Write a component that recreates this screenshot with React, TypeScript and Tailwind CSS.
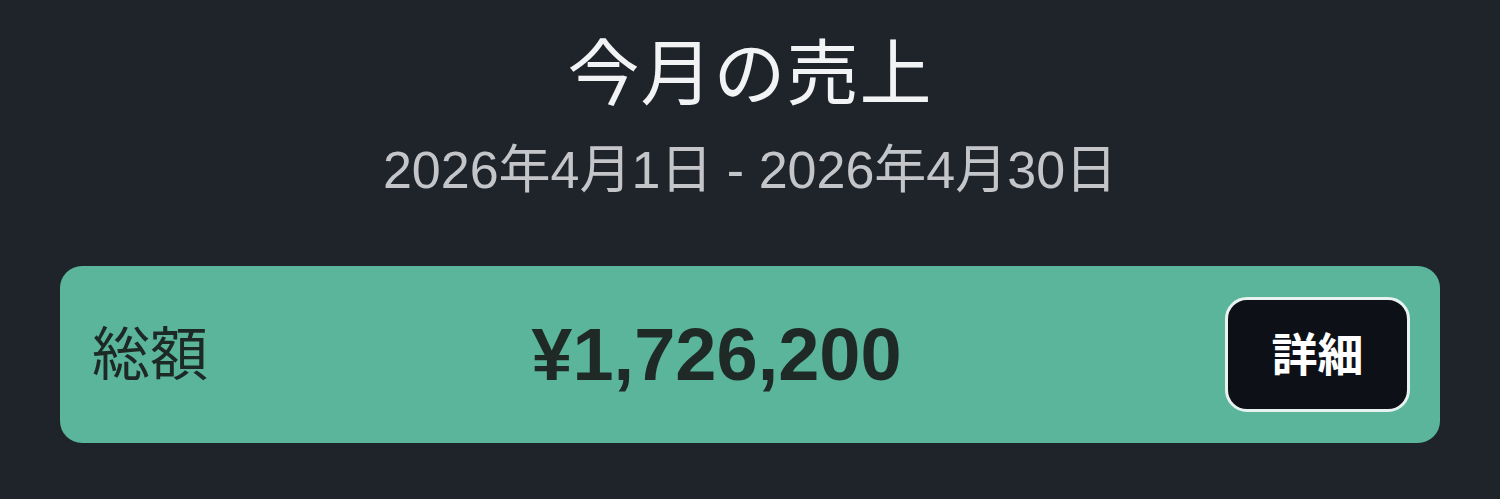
export default function App() {
  return (
    <div
      className="w-[1500px] h-[499px] bg-[#1f242b] flex flex-col items-center"
      style={{ fontFamily: '"Liberation Sans", "Noto Sans CJK JP", sans-serif' }}
    >
      <h1 className="mt-[38px] text-[72px] leading-none text-[#f2f3f4] tracking-[1px]">今月の売上</h1>
      <p className="mt-[34px] text-[52px] leading-none text-[#c3c5c8]">2026年4月1日 - 2026年4月30日</p>

      <div className="mt-[70px] w-[1380px] h-[177px] rounded-[22px] bg-[#5bb59b] flex items-center pl-[32px] pr-[30px]">
        <span className="text-[58px] leading-none text-[#1d2925]">総額</span>
        <span className="flex-1 text-center text-[74px] leading-none font-bold text-[#1f2a27]">¥1,726,200</span>
        <button className="w-[185px] h-[115px] rounded-[22px] bg-[#0d1117] border-[3px] border-[#e8f3ef] text-white text-[46px] font-bold leading-none">
          詳細
        </button>
      </div>
    </div>
  );
}
